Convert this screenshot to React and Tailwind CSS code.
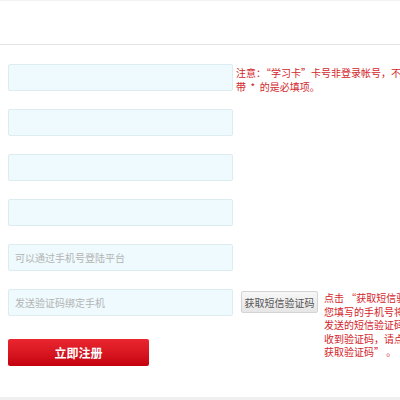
import React from 'react';

const FONT = { fontFamily: '"Noto Sans CJK SC", "Noto Sans", sans-serif' };

// plain field with the pale cyan fill used by the signup form
function Field({ placeholder }) {
  return (
    <input
      type="text"
      placeholder={placeholder}
      className="w-[225px] h-[27px] shrink-0 rounded-[2px] border border-[#dcecf1] bg-[#eefafd] px-[6px] text-[10px] text-[#666] placeholder:text-[#b4b4b4] outline-none"
    />
  );
}

function Note({ lines }) {
  return (
    <div className="text-[10px] leading-[13.5px] text-[#d2262b] whitespace-pre">
      {lines.map((l) => (
        <div key={l}>{l}</div>
      ))}
    </div>
  );
}

export default function App() {
  return (
    <div className="w-[400px] h-[400px] overflow-hidden bg-white flex flex-col" style={FONT}>
      {/* header strip */}
      <div className="h-[45px] shrink-0 border-t border-[#f2f2f2] border-b border-b-[#e4e4e4]" />

      <form className="flex-1 flex flex-col pl-2 pt-[19px] gap-[18px]">
        <div className="h-[27px] flex items-start gap-[3px]">
          <Field />
          <div className="pt-[2px]">
            <Note lines={['注意：“学习卡”卡号非登录帐号，不要用于登录！', '带  *  的是必填项。']} />
          </div>
        </div>
        <div className="h-[27px] flex">
          <Field />
        </div>
        <div className="h-[27px] flex">
          <Field />
        </div>
        <div className="h-[27px] flex">
          <Field />
        </div>
        <div className="h-[27px] flex">
          <Field placeholder="可以通过手机号登陆平台" />
        </div>
        <div className="h-[27px] flex items-start">
          <Field placeholder="发送验证码绑定手机" />
          <button
            type="button"
            className="ml-[8px] mt-[2px] w-[77px] h-[22px] shrink-0 rounded-[2px] border border-[#d4d4d4] bg-gradient-to-b from-[#f7f7f7] to-[#e6e6e6] text-[10px] text-[#555]"
          >
            获取短信验证码
          </button>
          <div className="ml-[6px] pt-[2px]">
            <Note
              lines={[
                '点击 “获取短信验证码”，',
                '您填写的手机号将收到平台',
                '发送的短信验证码。如未',
                '收到验证码，请点击“重新',
                '获取验证码” 。',
              ]}
            />
          </div>
        </div>
        <button
          type="button"
          className="mt-[5px] w-[141px] h-[27px] rounded-[2px] bg-gradient-to-b from-[#ea2630] to-[#c5000e] text-[12px] font-bold text-white"
        >
          立即注册
        </button>
      </form>

      <div className="h-[3px] shrink-0 bg-[#f0f0f0]" />
    </div>
  );
}
